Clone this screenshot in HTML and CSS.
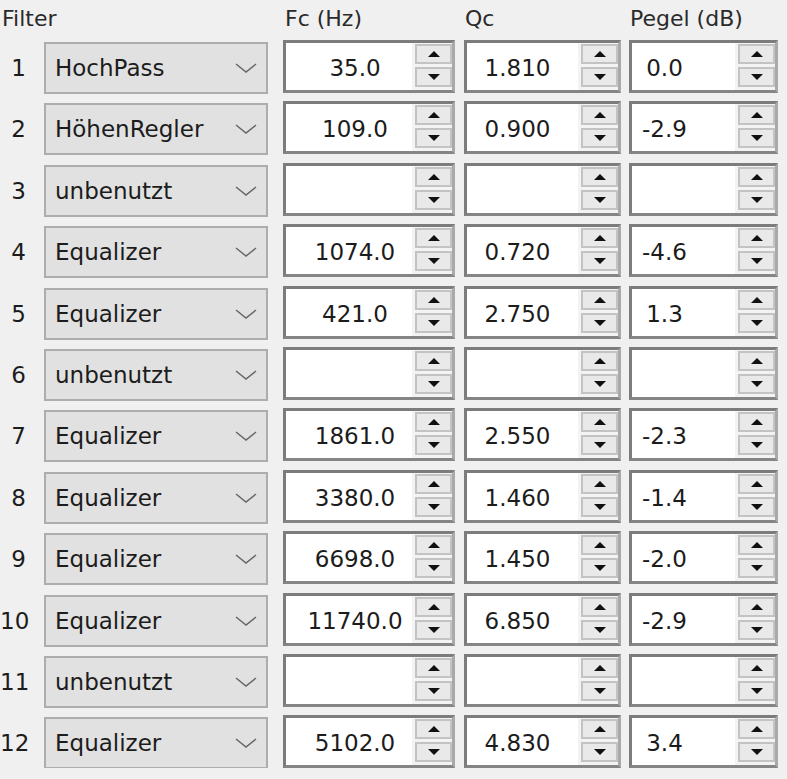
FILE: index.html
```html
<!DOCTYPE html>
<html lang="de">
<head>
    <meta charset="UTF-8">
    <title>Filter</title>
    <link rel="stylesheet" href="styles.css">
</head>
<body>
    <div class="filters">
        <div class="head">
            <div class="h-filter">Filter</div>
            <div class="h-fc">Fc (Hz)</div>
            <div class="h-qc">Qc</div>
            <div class="h-pegel">Pegel (dB)</div>
        </div>

        <div class="row">
            <div class="num">1</div>
            <div class="combo"><span>HochPass</span><svg class="chev" viewBox="0 0 22 10"><polyline points="1,1 11,9 21,1"/></svg></div>
            <div class="spin fc"><div class="val">35.0</div><div class="btns"><div class="btn"><i class="up"></i></div><div class="btn"><i class="down"></i></div></div></div>
            <div class="spin qc"><div class="val">1.810</div><div class="btns"><div class="btn"><i class="up"></i></div><div class="btn"><i class="down"></i></div></div></div>
            <div class="spin pegel"><div class="val">0.0</div><div class="btns"><div class="btn"><i class="up"></i></div><div class="btn"><i class="down"></i></div></div></div>
        </div>

        <div class="row">
            <div class="num">2</div>
            <div class="combo"><span>HöhenRegler</span><svg class="chev" viewBox="0 0 22 10"><polyline points="1,1 11,9 21,1"/></svg></div>
            <div class="spin fc"><div class="val">109.0</div><div class="btns"><div class="btn"><i class="up"></i></div><div class="btn"><i class="down"></i></div></div></div>
            <div class="spin qc"><div class="val">0.900</div><div class="btns"><div class="btn"><i class="up"></i></div><div class="btn"><i class="down"></i></div></div></div>
            <div class="spin pegel"><div class="val">-2.9</div><div class="btns"><div class="btn"><i class="up"></i></div><div class="btn"><i class="down"></i></div></div></div>
        </div>

        <div class="row">
            <div class="num">3</div>
            <div class="combo"><span>unbenutzt</span><svg class="chev" viewBox="0 0 22 10"><polyline points="1,1 11,9 21,1"/></svg></div>
            <div class="spin fc"><div class="val"></div><div class="btns"><div class="btn"><i class="up"></i></div><div class="btn"><i class="down"></i></div></div></div>
            <div class="spin qc"><div class="val"></div><div class="btns"><div class="btn"><i class="up"></i></div><div class="btn"><i class="down"></i></div></div></div>
            <div class="spin pegel"><div class="val"></div><div class="btns"><div class="btn"><i class="up"></i></div><div class="btn"><i class="down"></i></div></div></div>
        </div>

        <div class="row">
            <div class="num">4</div>
            <div class="combo"><span>Equalizer</span><svg class="chev" viewBox="0 0 22 10"><polyline points="1,1 11,9 21,1"/></svg></div>
            <div class="spin fc"><div class="val">1074.0</div><div class="btns"><div class="btn"><i class="up"></i></div><div class="btn"><i class="down"></i></div></div></div>
            <div class="spin qc"><div class="val">0.720</div><div class="btns"><div class="btn"><i class="up"></i></div><div class="btn"><i class="down"></i></div></div></div>
            <div class="spin pegel"><div class="val">-4.6</div><div class="btns"><div class="btn"><i class="up"></i></div><div class="btn"><i class="down"></i></div></div></div>
        </div>

        <div class="row">
            <div class="num">5</div>
            <div class="combo"><span>Equalizer</span><svg class="chev" viewBox="0 0 22 10"><polyline points="1,1 11,9 21,1"/></svg></div>
            <div class="spin fc"><div class="val">421.0</div><div class="btns"><div class="btn"><i class="up"></i></div><div class="btn"><i class="down"></i></div></div></div>
            <div class="spin qc"><div class="val">2.750</div><div class="btns"><div class="btn"><i class="up"></i></div><div class="btn"><i class="down"></i></div></div></div>
            <div class="spin pegel"><div class="val">1.3</div><div class="btns"><div class="btn"><i class="up"></i></div><div class="btn"><i class="down"></i></div></div></div>
        </div>

        <div class="row">
            <div class="num">6</div>
            <div class="combo"><span>unbenutzt</span><svg class="chev" viewBox="0 0 22 10"><polyline points="1,1 11,9 21,1"/></svg></div>
            <div class="spin fc"><div class="val"></div><div class="btns"><div class="btn"><i class="up"></i></div><div class="btn"><i class="down"></i></div></div></div>
            <div class="spin qc"><div class="val"></div><div class="btns"><div class="btn"><i class="up"></i></div><div class="btn"><i class="down"></i></div></div></div>
            <div class="spin pegel"><div class="val"></div><div class="btns"><div class="btn"><i class="up"></i></div><div class="btn"><i class="down"></i></div></div></div>
        </div>

        <div class="row">
            <div class="num">7</div>
            <div class="combo"><span>Equalizer</span><svg class="chev" viewBox="0 0 22 10"><polyline points="1,1 11,9 21,1"/></svg></div>
            <div class="spin fc"><div class="val">1861.0</div><div class="btns"><div class="btn"><i class="up"></i></div><div class="btn"><i class="down"></i></div></div></div>
            <div class="spin qc"><div class="val">2.550</div><div class="btns"><div class="btn"><i class="up"></i></div><div class="btn"><i class="down"></i></div></div></div>
            <div class="spin pegel"><div class="val">-2.3</div><div class="btns"><div class="btn"><i class="up"></i></div><div class="btn"><i class="down"></i></div></div></div>
        </div>

        <div class="row">
            <div class="num">8</div>
            <div class="combo"><span>Equalizer</span><svg class="chev" viewBox="0 0 22 10"><polyline points="1,1 11,9 21,1"/></svg></div>
            <div class="spin fc"><div class="val">3380.0</div><div class="btns"><div class="btn"><i class="up"></i></div><div class="btn"><i class="down"></i></div></div></div>
            <div class="spin qc"><div class="val">1.460</div><div class="btns"><div class="btn"><i class="up"></i></div><div class="btn"><i class="down"></i></div></div></div>
            <div class="spin pegel"><div class="val">-1.4</div><div class="btns"><div class="btn"><i class="up"></i></div><div class="btn"><i class="down"></i></div></div></div>
        </div>

        <div class="row">
            <div class="num">9</div>
            <div class="combo"><span>Equalizer</span><svg class="chev" viewBox="0 0 22 10"><polyline points="1,1 11,9 21,1"/></svg></div>
            <div class="spin fc"><div class="val">6698.0</div><div class="btns"><div class="btn"><i class="up"></i></div><div class="btn"><i class="down"></i></div></div></div>
            <div class="spin qc"><div class="val">1.450</div><div class="btns"><div class="btn"><i class="up"></i></div><div class="btn"><i class="down"></i></div></div></div>
            <div class="spin pegel"><div class="val">-2.0</div><div class="btns"><div class="btn"><i class="up"></i></div><div class="btn"><i class="down"></i></div></div></div>
        </div>

        <div class="row">
            <div class="num">10</div>
            <div class="combo"><span>Equalizer</span><svg class="chev" viewBox="0 0 22 10"><polyline points="1,1 11,9 21,1"/></svg></div>
            <div class="spin fc"><div class="val">11740.0</div><div class="btns"><div class="btn"><i class="up"></i></div><div class="btn"><i class="down"></i></div></div></div>
            <div class="spin qc"><div class="val">6.850</div><div class="btns"><div class="btn"><i class="up"></i></div><div class="btn"><i class="down"></i></div></div></div>
            <div class="spin pegel"><div class="val">-2.9</div><div class="btns"><div class="btn"><i class="up"></i></div><div class="btn"><i class="down"></i></div></div></div>
        </div>

        <div class="row">
            <div class="num">11</div>
            <div class="combo"><span>unbenutzt</span><svg class="chev" viewBox="0 0 22 10"><polyline points="1,1 11,9 21,1"/></svg></div>
            <div class="spin fc"><div class="val"></div><div class="btns"><div class="btn"><i class="up"></i></div><div class="btn"><i class="down"></i></div></div></div>
            <div class="spin qc"><div class="val"></div><div class="btns"><div class="btn"><i class="up"></i></div><div class="btn"><i class="down"></i></div></div></div>
            <div class="spin pegel"><div class="val"></div><div class="btns"><div class="btn"><i class="up"></i></div><div class="btn"><i class="down"></i></div></div></div>
        </div>

        <div class="row">
            <div class="num">12</div>
            <div class="combo"><span>Equalizer</span><svg class="chev" viewBox="0 0 22 10"><polyline points="1,1 11,9 21,1"/></svg></div>
            <div class="spin fc"><div class="val">5102.0</div><div class="btns"><div class="btn"><i class="up"></i></div><div class="btn"><i class="down"></i></div></div></div>
            <div class="spin qc"><div class="val">4.830</div><div class="btns"><div class="btn"><i class="up"></i></div><div class="btn"><i class="down"></i></div></div></div>
            <div class="spin pegel"><div class="val">3.4</div><div class="btns"><div class="btn"><i class="up"></i></div><div class="btn"><i class="down"></i></div></div></div>
        </div>
    </div>
</body>
</html>
```

FILE: styles.css
```css
* {
    margin: 0;
    padding: 0;
    box-sizing: border-box;
}

body {
    background-color: #f0f0f0;
    font-family: "DejaVu Sans", sans-serif;
    font-size: 23px;
    color: #1c1c1c;
}

.filters {
    display: flex;
    flex-direction: column;
    gap: 8.4px;
}

.head {
    display: flex;
    height: 31.6px;
    padding-top: 5px;
    line-height: 27px;
    font-size: 22px;
    color: #2a2a2a;
}

.h-filter {
    width: 283px;
    padding-left: 2px;
}

.h-fc {
    width: 181px;
    padding-left: 2px;
}

.h-qc {
    width: 165px;
    padding-left: 1px;
}

.h-pegel {
    padding-left: 1px;
}

.row {
    display: flex;
    height: 53px;
}

.num {
    width: 44px;
    padding-right: 18px;
    text-align: right;
    line-height: 57px;
}

.combo {
    width: 224px;
    height: 52px;
    margin-top: 2px;
    display: flex;
    align-items: center;
    justify-content: space-between;
    padding: 0 9px 0 9px;
    background-color: #e1e1e1;
    border: 2px solid #adadad;
}

.chev {
    width: 22px;
    height: 10px;
    fill: none;
    stroke: #666;
    stroke-width: 1.5;
}

.spin {
    display: flex;
    height: 53px;
    border: 3px solid;
    border-color: #7c7c7c #a9a9a9 #858585 #7c7c7c;
    background-color: #fff;
}

.spin.fc {
    width: 172px;
    margin-left: 15px;
}

.spin.qc {
    width: 157px;
    margin-left: 9px;
}

.spin.pegel {
    width: 149px;
    margin-left: 8px;
}

.val {
    flex: 1;
    text-align: center;
    line-height: 50px;
}

.fc .val {
    padding-left: 12px;
}

.qc .val {
    padding-right: 10px;
}

.pegel .val {
    padding-right: 38px;
}

.btns {
    width: 40px;
    display: flex;
    flex-direction: column;
    gap: 3px;
    padding: 1px 0 3px 3px;
    background-color: #f3f3f3;
}

.btn {
    flex: 1;
    display: flex;
    align-items: center;
    justify-content: center;
    background-color: #e9e9e9;
    border: 2px solid #c3c3c3;
}

.btn i {
    width: 0;
    height: 0;
    border-left: 6px solid transparent;
    border-right: 6px solid transparent;
}

.btn .up {
    border-bottom: 6px solid #111;
}

.btn .down {
    border-top: 6px solid #111;
}
```
